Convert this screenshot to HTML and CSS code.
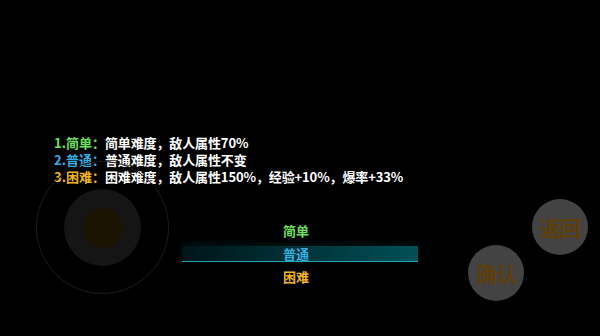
FILE: index.html
```html
<!DOCTYPE html>
<html lang="zh-CN">
<head>
  <meta charset="UTF-8">
  <meta name="viewport" content="width=device-width, initial-scale=1.0">
  <title>难度选择</title>
  <link rel="stylesheet" href="styles.css">
</head>
<body>
  <div class="screen">
    <div class="info">
      <p><span class="tag easy">1.简单：</span><span class="desc">简单难度，敌人属性70%</span></p>
      <p><span class="tag normal">2.普通：</span><span class="desc">普通难度，敌人属性不变</span></p>
      <p><span class="tag hard">3.困难：</span><span class="desc">困难难度，敌人属性150%，经验+10%，爆率+33%</span></p>
    </div>

    <ul class="menu">
      <li class="easy">简单</li>
      <li class="normal selected">普通</li>
      <li class="hard">困难</li>
    </ul>

    <!-- virtual controls -->
    <div class="joystick">
      <div class="stick">
        <div class="knob"></div>
      </div>
    </div>
    <div class="btn btn-back">返回</div>
    <div class="btn btn-ok">确认</div>
  </div>
</body>
</html>
```

FILE: styles.css
```css
/* Reset */
body, p, ul, li {
  margin: 0;
  padding: 0;
  box-sizing: border-box;
}

body {
  background-color: #000;
  color: #fff;
  font-family: "Noto Sans CJK SC", "Noto Sans", sans-serif;
}

.screen {
  position: relative;
  width: 600px;
  height: 336px;
  overflow: hidden;
}

/* Difficulty description */
.info {
  padding: 134px 0 0 54px;
  font-size: 13px;
  font-weight: bold;
}

.info p {
  display: flex;
  height: 17px;
}

.tag, .desc {
  display: block;
  line-height: 17px;
  height: 17px;
}

.desc {
  letter-spacing: -0.12px;
}

.easy { color: #6ee05a; }
.normal { color: #36aee2; }
.hard { color: #f0b41e; }

/* Selection menu */
.menu {
  list-style: none;
  margin: 38px 0 0 182px;
  width: 236px;
  display: flex;
  flex-direction: column;
  gap: 7px;
}

.menu li {
  height: 16px;
  line-height: 16px;
  font-size: 13px;
  font-weight: bold;
  text-align: center;
  padding-right: 8px;
}

.menu li.selected {
  background: linear-gradient(to right, rgba(0, 70, 80, 0.3), rgba(0, 115, 125, 0.7));
  border-bottom: 1px solid #1aa8b4;
  box-shadow: 0 -3px 6px rgba(0, 90, 100, 0.2);
}

/* Virtual joystick */
.joystick {
  position: absolute;
  left: 36px;
  top: 161px;
  width: 131px;
  height: 131px;
  border: 1.5px solid #1c1c1c;
  border-radius: 50%;
  display: flex;
  justify-content: center;
  align-items: center;
}

.stick {
  width: 77px;
  height: 77px;
  border-radius: 50%;
  background-color: #151515;
  display: flex;
  justify-content: center;
  align-items: center;
}

.knob {
  width: 40px;
  height: 40px;
  border-radius: 50%;
  background-color: #1b1403;
}

/* Action buttons */
.btn {
  position: absolute;
  width: 56px;
  height: 56px;
  border-radius: 50%;
  background-color: #434343;
  color: #5e3f0a;
  font-size: 21px;
  font-weight: bold;
  display: flex;
  justify-content: center;
  align-items: center;
  letter-spacing: -1px;
}

.btn-back {
  left: 532px;
  top: 199px;
}

.btn-ok {
  left: 468px;
  top: 245px;
}
```
